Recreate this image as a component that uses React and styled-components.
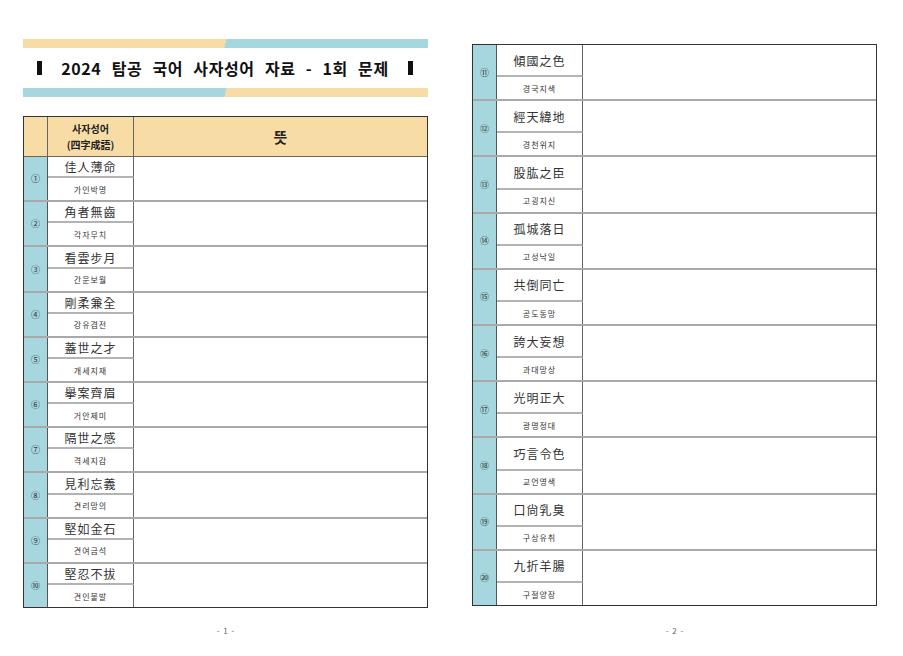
import React from 'react';
import styled, { createGlobalStyle } from 'styled-components';

const GlobalStyle = createGlobalStyle`
  body {
    margin: 0;
    background: #fff;
    font-family: "Noto Sans CJK KR", "Noto Sans", sans-serif;
    color: #222;
  }
`;

const ORANGE = '#f7dca6';
const TEAL = '#a6d7de';

const first = [
  ['①', '佳人薄命', '가인박명'],
  ['②', '角者無齒', '각자무치'],
  ['③', '看雲步月', '간운보월'],
  ['④', '剛柔兼全', '강유겸전'],
  ['⑤', '蓋世之才', '개세지재'],
  ['⑥', '擧案齊眉', '거안제미'],
  ['⑦', '隔世之感', '격세지감'],
  ['⑧', '見利忘義', '견리망의'],
  ['⑨', '堅如金石', '견여금석'],
  ['⑩', '堅忍不拔', '견인불발'],
];

const second = [
  ['⑪', '傾國之色', '경국지색'],
  ['⑫', '經天緯地', '경천위지'],
  ['⑬', '股肱之臣', '고굉지신'],
  ['⑭', '孤城落日', '고성낙일'],
  ['⑮', '共倒同亡', '공도동망'],
  ['⑯', '誇大妄想', '과대망상'],
  ['⑰', '光明正大', '광명정대'],
  ['⑱', '巧言令色', '교언영색'],
  ['⑲', '口尙乳臭', '구상유취'],
  ['⑳', '九折羊腸', '구절양장'],
];

export default function App() {
  return (
    <>
      <GlobalStyle />
      <Spread>
        <Page $top={39}>
          <Bar $from={ORANGE} $to={TEAL} />
          <Title>
            <Mark />
            <span>2024 탐공 국어 사자성어 자료 - 1회 문제</span>
            <Mark />
          </Title>
          <Bar $from={TEAL} $to={ORANGE} />
          <Table $gap={19} $h={492}>
            <HeadRow>
              <HeadCell />
              <HeadCell>사자성어<br />(四字成語)</HeadCell>
              <HeadCell $big>뜻</HeadCell>
            </HeadRow>
            {first.map(([n, h, k]) => (
              <Row key={n}>
                <Num>{n}</Num>
                <Hanja>{h}</Hanja>
                <Hangul>{k}</Hangul>
                <Meaning />
              </Row>
            ))}
          </Table>
          <Footer>- 1 -</Footer>
        </Page>
        <Page $top={44}>
          <Table $gap={0} $h={562}>
            {second.map(([n, h, k]) => (
              <Row key={n}>
                <Num>{n}</Num>
                <Hanja>{h}</Hanja>
                <Hangul>{k}</Hangul>
                <Meaning />
              </Row>
            ))}
          </Table>
          <Footer>- 2 -</Footer>
        </Page>
      </Spread>
    </>
  );
}

const Spread = styled.div`
  display: flex;
  gap: 44px;
  padding-left: 23px;
  width: 903px;
  height: 656px;
  box-sizing: border-box;
`;

const Page = styled.div`
  width: 405px;
  height: 100%;
  display: flex;
  flex-direction: column;
  padding-top: ${p => p.$top}px;
  box-sizing: border-box;
`;

const Bar = styled.div`
  height: 9px;
  background: linear-gradient(105deg, ${p => p.$from} 50%, ${p => p.$to} 50%);
`;

const Title = styled.div`
  height: 40px;
  display: flex;
  align-items: center;
  justify-content: space-between;
  padding: 0 15px 0 14px;
  font-size: 16px;
  font-weight: 700;
  color: #111;
  letter-spacing: 0.6px;
  word-spacing: 6px;
`;

const Mark = styled.i`
  display: block;
  width: 5px;
  height: 14px;
  background: #111;
`;

const Table = styled.div`
  margin-top: ${p => p.$gap}px;
  height: ${p => p.$h}px;
  border: 1px solid #333;
  display: flex;
  flex-direction: column;
  box-sizing: border-box;
`;

const HeadRow = styled.div`
  height: 39px;
  flex: none;
  display: grid;
  grid-template-columns: 24px 86px 1fr;
  background: ${ORANGE};
  border-bottom: 1px solid #666;
`;

const HeadCell = styled.div`
  display: flex;
  align-items: center;
  justify-content: center;
  text-align: center;
  font-weight: 700;
  font-size: ${p => (p.$big ? '15px' : '10px')};
  line-height: 1.55;
  color: #222;
  border-right: 1px solid #666;
  &:last-child { border-right: none; }
`;

const Row = styled.div`
  flex: 1;
  display: grid;
  grid-template-columns: 24px 86px 1fr;
  grid-template-rows: 1fr 22px;
  & + & { border-top: 2px solid #a9a9a9; }
`;

const Num = styled.div`
  grid-row: 1 / 3;
  background: ${TEAL};
  border-right: 1px solid #555;
  display: flex;
  align-items: center;
  justify-content: center;
  font-size: 9px;
  color: #333;
`;

const Hanja = styled.div`
  display: flex;
  align-items: center;
  justify-content: center;
  font-size: 12px;
  color: #333;
  letter-spacing: 1px;
  border-right: 1px solid #666;
  border-bottom: 2px solid #b3b3b3;
`;

const Hangul = styled.div`
  display: flex;
  align-items: center;
  justify-content: center;
  font-size: 8px;
  color: #333;
  letter-spacing: 1px;
  border-right: 1px solid #666;
`;

const Meaning = styled.div`
  grid-column: 3;
  grid-row: 1 / 3;
`;

const Footer = styled.div`
  margin-top: auto;
  height: 20px;
  margin-bottom: 16px;
  display: flex;
  align-items: center;
  justify-content: center;
  font-size: 8px;
  color: #666;
  word-spacing: 2px;
`;
